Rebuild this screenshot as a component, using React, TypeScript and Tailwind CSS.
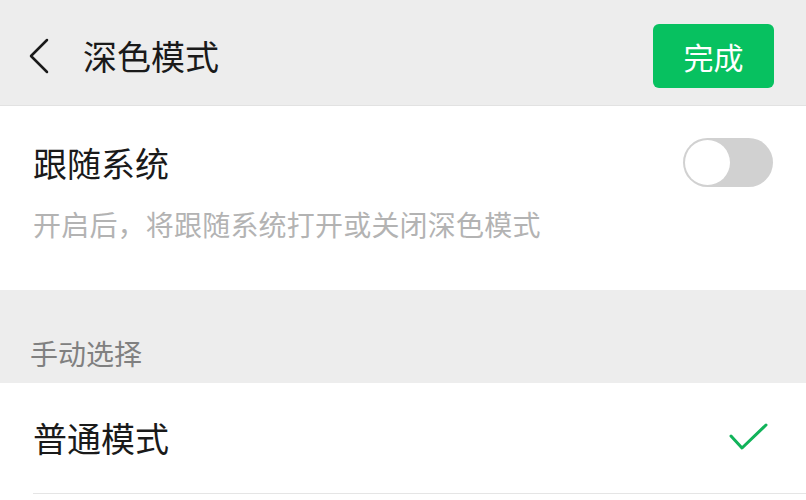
import React from "react";

const FONT = { fontFamily: '"Noto Sans CJK SC", "Noto Sans", sans-serif' };

function BackIcon() {
  return (
    <svg width="22" height="36" viewBox="0 0 22 36" className="block">
      <path d="M19 2 L3 18 L19 34" fill="none" stroke="#1a1a1a" strokeWidth="2.5" strokeLinecap="round" strokeLinejoin="round" />
    </svg>
  );
}

function CheckIcon() {
  return (
    <svg width="42" height="30" viewBox="0 0 42 30" className="block">
      <path d="M3 13 L14 25 L38 2" fill="none" stroke="#11b35a" strokeWidth="3" strokeLinecap="round" strokeLinejoin="round" />
    </svg>
  );
}

function Toggle() {
  return (
    <div className="w-[90px] h-[49px] rounded-full bg-[#d1d1d1] p-[2px] flex items-center">
      <div className="w-[45px] h-[45px] rounded-full bg-white" />
    </div>
  );
}

export default function App() {
  return (
    <div className="w-[806px] h-[500px] overflow-hidden bg-[#ededed] text-[#1a1a1a]" style={FONT}>
      {/* Header */}
      <div className="flex items-center pt-[24px] pb-[17px] pl-[28px] pr-[32px] border-b border-[#e2e2e2]">
        <BackIcon />
        <span className="ml-[33px] text-[34px] leading-none">深色模式</span>
        <button className="ml-auto w-[121px] h-[64px] rounded-[6px] bg-[#07c160] text-white text-[30px] leading-none">
          完成
        </button>
      </div>

      {/* Follow system */}
      <div className="bg-white pt-[32px] pb-[46px] px-[33px]">
        <div className="flex items-center justify-between h-[49px]">
          <span className="text-[34px] leading-none">跟随系统</span>
          <Toggle />
        </div>
        <p className="mt-[17px] text-[28px] leading-[40px] tracking-[0.2px] text-[#b3b3b3]">开启后，将跟随系统打开或关闭深色模式</p>
      </div>

      {/* Manual section title */}
      <div className="pt-[43px] pb-[10px] px-[30px]">
        <span className="block text-[28px] leading-[40px] text-[#808080]">手动选择</span>
      </div>

      {/* Options */}
      <div className="bg-white pl-[33px]">
        <div className="flex items-center justify-between h-[111px] pr-[36px] border-b border-[#e5e5e5]">
          <span className="text-[34px] leading-none">普通模式</span>
          <CheckIcon />
        </div>
        <div className="h-[40px]" />
      </div>
    </div>
  );
}
